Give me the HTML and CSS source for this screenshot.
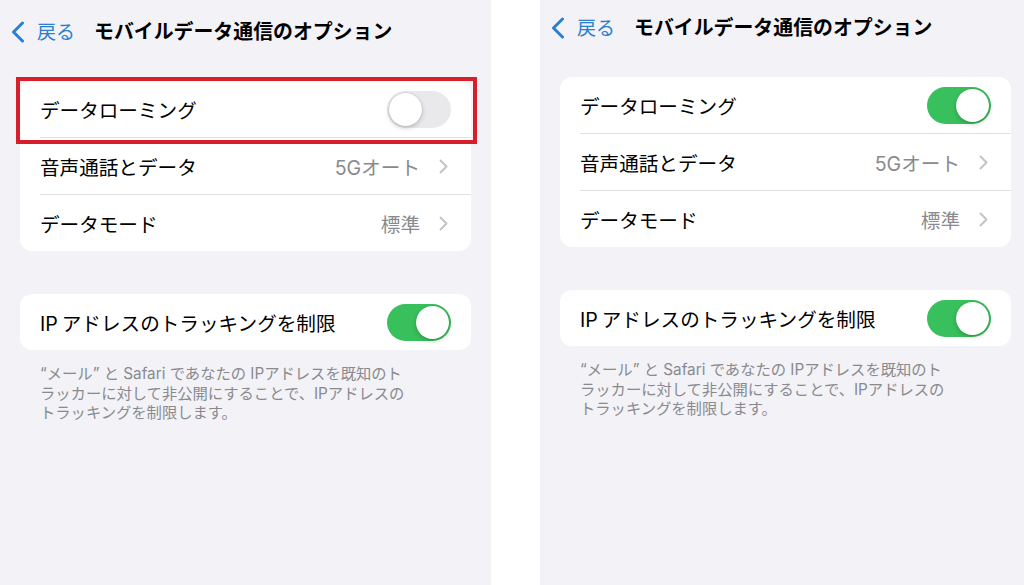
FILE: index.html
```html
<!DOCTYPE html>
<html lang="ja">
<head>
    <meta charset="UTF-8">
    <title>モバイルデータ通信のオプション</title>
    <link rel="stylesheet" href="styles.css">
</head>
<body>
<div class="page">
    <section class="phone">
        <div class="screen">
            <header class="nav">
                <a class="back">
                    <svg class="back-icon" width="14" height="22" viewBox="0 0 14 22"><path d="M11.5 2 L2.5 11 L11.5 20" fill="none" stroke="currentColor" stroke-width="3" stroke-linecap="round" stroke-linejoin="round"/></svg>
                    <span>戻る</span>
                </a>
                <h1 class="title">モバイルデータ通信のオプション</h1>
            </header>
            <div class="group">
                <div class="row marked">
                    <span class="label">データローミング</span>
                    <span class="switch"><span class="knob"></span></span>
                </div>
                <div class="row">
                    <span class="label">音声通話とデータ</span>
                    <span class="value">5Gオート</span>
                    <svg class="chevron" width="9" height="15" viewBox="0 0 9 15"><path d="M1.5 1.5 L7.5 7.5 L1.5 13.5" fill="none" stroke="currentColor" stroke-width="2" stroke-linecap="round" stroke-linejoin="round"/></svg>
                </div>
                <div class="row">
                    <span class="label">データモード</span>
                    <span class="value">標準</span>
                    <svg class="chevron" width="9" height="15" viewBox="0 0 9 15"><path d="M1.5 1.5 L7.5 7.5 L1.5 13.5" fill="none" stroke="currentColor" stroke-width="2" stroke-linecap="round" stroke-linejoin="round"/></svg>
                </div>
            </div>
            <div class="group group-second">
                <div class="row">
                    <span class="label"><span class="latin">IP</span>アドレスのトラッキングを制限</span>
                    <span class="switch on"><span class="knob"></span></span>
                </div>
            </div>
            <p class="footnote">“メール” と Safari であなたの IPアドレスを既知のト<br>ラッカーに対して非公開にすることで、IPアドレスの<br>トラッキングを制限します。</p>
        </div>
    </section>

    <section class="phone phone-right">
        <div class="screen">
            <header class="nav">
                <a class="back">
                    <svg class="back-icon" width="14" height="22" viewBox="0 0 14 22"><path d="M11.5 2 L2.5 11 L11.5 20" fill="none" stroke="currentColor" stroke-width="3" stroke-linecap="round" stroke-linejoin="round"/></svg>
                    <span>戻る</span>
                </a>
                <h1 class="title">モバイルデータ通信のオプション</h1>
            </header>
            <div class="group">
                <div class="row">
                    <span class="label">データローミング</span>
                    <span class="switch on"><span class="knob"></span></span>
                </div>
                <div class="row">
                    <span class="label">音声通話とデータ</span>
                    <span class="value">5Gオート</span>
                    <svg class="chevron" width="9" height="15" viewBox="0 0 9 15"><path d="M1.5 1.5 L7.5 7.5 L1.5 13.5" fill="none" stroke="currentColor" stroke-width="2" stroke-linecap="round" stroke-linejoin="round"/></svg>
                </div>
                <div class="row">
                    <span class="label">データモード</span>
                    <span class="value">標準</span>
                    <svg class="chevron" width="9" height="15" viewBox="0 0 9 15"><path d="M1.5 1.5 L7.5 7.5 L1.5 13.5" fill="none" stroke="currentColor" stroke-width="2" stroke-linecap="round" stroke-linejoin="round"/></svg>
                </div>
            </div>
            <div class="group group-second">
                <div class="row">
                    <span class="label"><span class="latin">IP</span>アドレスのトラッキングを制限</span>
                    <span class="switch on"><span class="knob"></span></span>
                </div>
            </div>
            <p class="footnote">“メール” と Safari であなたの IPアドレスを既知のト<br>ラッカーに対して非公開にすることで、IPアドレスの<br>トラッキングを制限します。</p>
        </div>
    </section>
</div>
</body>
</html>
```

FILE: styles.css
```css
html, body{
    margin: 0;
    padding: 0;
    background: #ffffff;
}
body{
    font-family: "Inter", "Noto Sans CJK JP", sans-serif;
    color: #000000;
}
.page{
    display: flex;
    gap: 49px;
    width: 1024px;
    height: 585px;
}
.phone{
    width: 491px;
    height: 585px;
    background: #f2f2f7;
    overflow: hidden;
}
.phone-right{
    width: 484px;
}
.screen{
    width: 491px;
}
.phone-right .screen{
    margin-top: -4px;
}
.nav{
    height: 60px;
    display: flex;
    align-items: center;
    padding-left: 11px;
}
.nav .back{
    display: flex;
    align-items: center;
    gap: 12px;
    color: #2a7fd2;
    font-size: 19px;
}
.nav .back .back-icon{
    margin-top: 3px;
}
.nav .title{
    margin: 0 0 0 19px;
    font-size: 19.9px;
    font-weight: 700;
}
.group{
    margin: 21px 20px 0 20px;
    background: #ffffff;
    border-radius: 12px;
}
.group-second{
    margin-top: 43px;
}
.group .row{
    position: relative;
    height: 56px;
    margin-left: 20px;
    padding-right: 20px;
    display: flex;
    align-items: center;
    border-bottom: 1px solid #e1e1e4;
    font-size: 19.6px;
}
.group .row:last-child{
    border-bottom: none;
}
.group .row .label{
    flex: 1;
}
.group .row .latin{
    margin-right: 4px;
}
.group .row .value{
    color: #8a8a8e;
}
.group .row .chevron{
    margin: 1px 3px 0 19px;
    color: #c4c4c7;
}
.group .row.marked::after{
    content: "";
    position: absolute;
    top: -4px;
    left: -24px;
    right: -6px;
    bottom: -7px;
    border: 4px solid #d71f2a;
}
.switch{
    width: 64px;
    height: 37px;
    padding: 2px;
    box-sizing: border-box;
    border-radius: 19px;
    background: #e9e9eb;
    display: flex;
    align-items: center;
}
.switch .knob{
    width: 33px;
    height: 33px;
    border-radius: 50%;
    background: #ffffff;
    box-shadow: 0 2px 5px rgba(0, 0, 0, 0.2), 0 0 0 0.5px rgba(0, 0, 0, 0.1);
}
.switch.on{
    background: #38c05c;
    justify-content: flex-end;
}
.footnote{
    margin: 0;
    padding: 14px 20px 0 40px;
    font-size: 15.3px;
    line-height: 19.5px;
    color: #8a8a8e;
}
```
